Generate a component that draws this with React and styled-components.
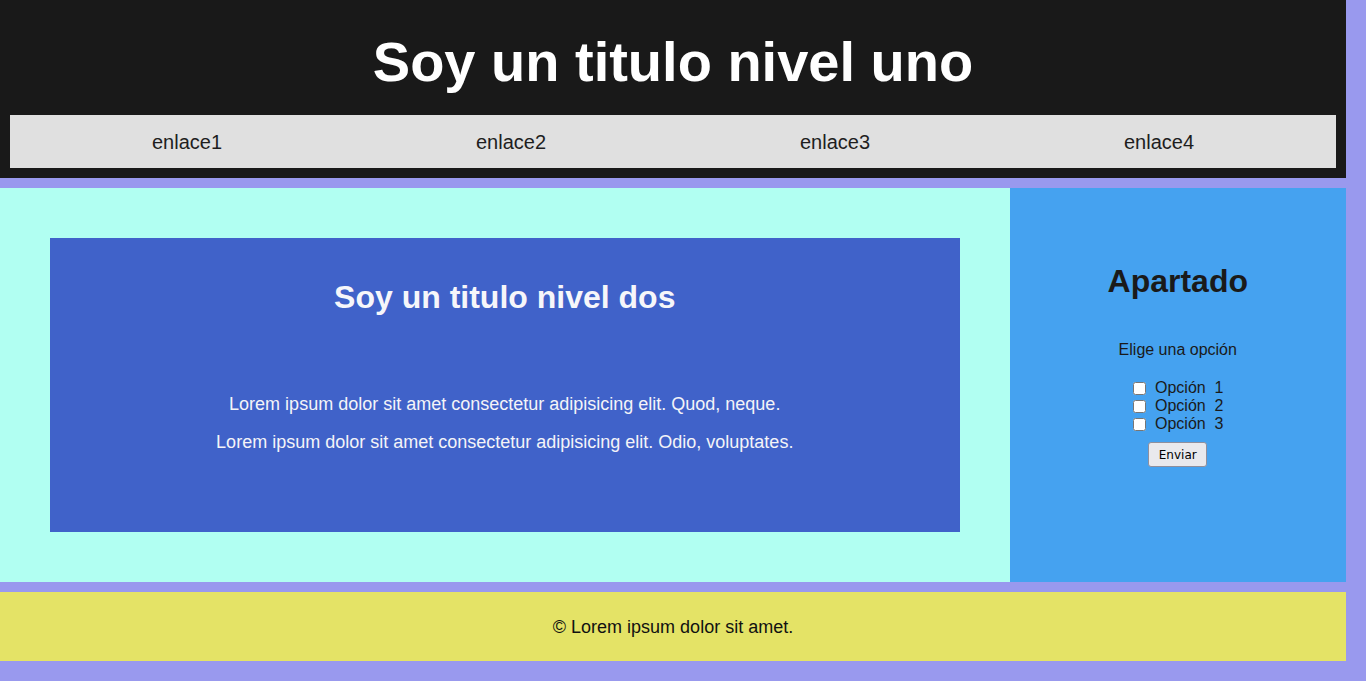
import React from "react";
import styled, { createGlobalStyle } from "styled-components";

const GlobalStyle = createGlobalStyle`
  * {
    box-sizing: border-box;
  }

  body {
    margin: 0;
    background-color: #9999ee;
    font-family: "Liberation Sans", Arial, sans-serif;
  }
`;

const links = ["enlace1", "enlace2", "enlace3", "enlace4"];
const options = ["1", "2", "3"];

const App = () => {
  return (
    <>
      <GlobalStyle />
      <Page>
        <Header>
          <Title>Soy un titulo nivel uno</Title>
          <Nav>
            {links.map((link) => (
              <NavLink key={link} href="#">
                {link}
              </NavLink>
            ))}
          </Nav>
        </Header>

        <Main>
          <Section>
            <Article>
              <ArticleTitle>Soy un titulo nivel dos</ArticleTitle>
              <Text>
                Lorem ipsum dolor sit amet consectetur adipisicing elit. Quod,
                neque.
              </Text>
              <Text>
                Lorem ipsum dolor sit amet consectetur adipisicing elit. Odio,
                voluptates.
              </Text>
            </Article>
          </Section>

          <Aside>
            <AsideTitle>Apartado</AsideTitle>
            <form onSubmit={(e) => e.preventDefault()}>
              <Legend>Elige una opción</Legend>
              <Options>
                {options.map((n) => (
                  <Option key={n}>
                    <Check type="checkbox" name="opcion" value={n} />
                    {`Opción  ${n}`}
                  </Option>
                ))}
              </Options>
              <Button type="submit">Enviar</Button>
            </form>
          </Aside>
        </Main>

        <Footer>© Lorem ipsum dolor sit amet.</Footer>
      </Page>
    </>
  );
};

export default App;

const Page = styled.div`
  display: flex;
  flex-direction: column;
  gap: 10px;
  padding: 0 20px 20px 0;
`;

const Header = styled.header`
  background-color: #191919;
  padding: 10px;
`;

const Title = styled.h1`
  margin: 20px 0 21px;
  color: #ffffff;
  font-size: 56px;
  line-height: 64px;
  font-weight: bold;
  text-align: center;
`;

const Nav = styled.nav`
  display: grid;
  grid-template-columns: repeat(4, 1fr);
  padding: 0 15px;
  background-color: #e0e0e0;
`;

const NavLink = styled.a`
  padding: 16px 0 14px;
  color: #1e1e1e;
  font-size: 20px;
  line-height: 23px;
  text-align: center;
  text-decoration: none;
`;

const Main = styled.main`
  display: grid;
  grid-template-columns: 3fr 1fr;
`;

const Section = styled.section`
  padding: 50px;
  background-color: #b1fff2;
`;

const Article = styled.article`
  min-height: 294px;
  padding: 41px 20px 0;
  background-color: #4062c9;
  color: #f4f4f8;
  text-align: center;
`;

const ArticleTitle = styled.h2`
  margin: 0 0 78px;
  color: #f6f6fa;
  font-size: 32px;
  line-height: 37px;
`;

const Text = styled.p`
  margin: 0 0 17px;
  font-size: 18px;
  line-height: 21px;
`;

const Aside = styled.aside`
  padding-top: 75px;
  background-color: #45a2f0;
  color: #1a1a1a;
  text-align: center;
`;

const AsideTitle = styled.h2`
  margin: 0 0 41px;
  font-size: 32px;
  line-height: 37px;
`;

const Legend = styled.p`
  margin: 0 0 20px;
  font-size: 16px;
  line-height: 18px;
`;

const Options = styled.div`
  display: flex;
  flex-direction: column;
  align-items: center;
  margin-bottom: 9px;
`;

const Option = styled.label`
  display: flex;
  align-items: center;
  height: 18px;
  padding-right: 2px;
  font-size: 16px;
  white-space: pre;
`;

const Check = styled.input`
  width: 13px;
  height: 13px;
  margin: 0 9px 0 3px;
`;

const Button = styled.button`
  width: 59px;
  height: 25px;
  padding: 0;
  border: 1px solid #8f8f9d;
  border-radius: 3px;
  background-color: #e9e9ed;
  color: #000000;
  font-family: "DejaVu Sans", sans-serif;
  font-size: 12px;
`;

const Footer = styled.footer`
  padding: 25px 0 23px;
  background-color: #e4e366;
  color: #111111;
  font-size: 18px;
  line-height: 21px;
  text-align: center;
`;
